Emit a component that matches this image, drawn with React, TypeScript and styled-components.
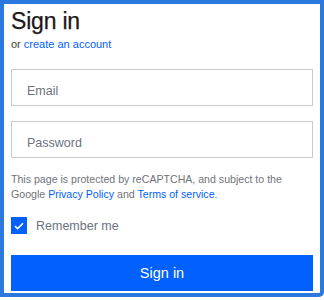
import React from "react";
import styled, { createGlobalStyle } from "styled-components";

const Global = createGlobalStyle`
  html, body { margin: 0; padding: 0; background: #ffffff; }
  * { box-sizing: border-box; }
`;

const Frame = styled.div`
  width: 324px;
  height: 297px;
  border: 4px solid #2a79de;
  border-radius: 0 0 5px 0;
  padding: 3px 7px 0 7px;
  background: #ffffff;
  font-family: "Liberation Sans", Arial, sans-serif;
  overflow: hidden;
`;

const Title = styled.h1`
  margin: 0;
  font-size: 23px;
  line-height: 28px;
  font-weight: 400;
  color: #1e1919;
  letter-spacing: -0.2px;
  -webkit-text-stroke: 0.25px #1e1919;
`;

const Sub = styled.div`
  margin-top: 2px;
  font-size: 11px;
  line-height: 14px;
  color: #3d3d3d;
`;

const Link = styled.a`
  color: #0061fe;
  text-decoration: none;
`;

const Field = styled.input<{ $mt: number }>`
  display: block;
  width: 100%;
  height: 37px;
  margin-top: ${(p) => p.$mt}px;
  border: 1px solid #c8cacd;
  border-radius: 0;
  padding: 6px 15px 0 15px;
  font-family: "Liberation Sans", Arial, sans-serif;
  font-size: 12.5px;
  color: #1e1919;
  outline: none;
  &::placeholder { color: #6b7380; }
`;

const Notice = styled.p`
  margin: 14px 0 0 0;
  font-size: 10.6px;
  line-height: 15px;
  color: #6f7378;
`;

const CheckRow = styled.label`
  display: flex;
  align-items: center;
  gap: 9px;
  margin-top: 15px;
  height: 17px;
  font-size: 12.5px;
  color: #6b7380;
`;

const Box = styled.span`
  width: 16px;
  height: 17px;
  background: #0061fe;
  display: flex;
  align-items: center;
  justify-content: center;
`;

const Button = styled.button`
  display: block;
  width: 100%;
  height: 36px;
  margin-top: 21px;
  border: none;
  background: #0061fe;
  color: #ffffff;
  font-family: "Liberation Sans", Arial, sans-serif;
  font-size: 14.5px;
  cursor: pointer;
`;

export default function App() {
  return (
    <>
      <Global />
      <Frame>
        <Title>Sign in</Title>
        <Sub>
          or <Link href="#">create an account</Link>
        </Sub>
        <Field $mt={18} placeholder="Email" />
        <Field $mt={15} type="password" placeholder="Password" />
        <Notice>
          This page is protected by reCAPTCHA, and subject to the Google{" "}
          <Link href="#">Privacy Policy</Link> and <Link href="#">Terms of service</Link>.
        </Notice>
        <CheckRow>
          <Box>
            <svg width="10" height="8" viewBox="0 0 10 8">
              <path d="M1 4.2 L3.6 6.6 L9 1.2" fill="none" stroke="#fff" strokeWidth="1.6" />
            </svg>
          </Box>
          Remember me
        </CheckRow>
        <Button>Sign in</Button>
      </Frame>
    </>
  );
}
